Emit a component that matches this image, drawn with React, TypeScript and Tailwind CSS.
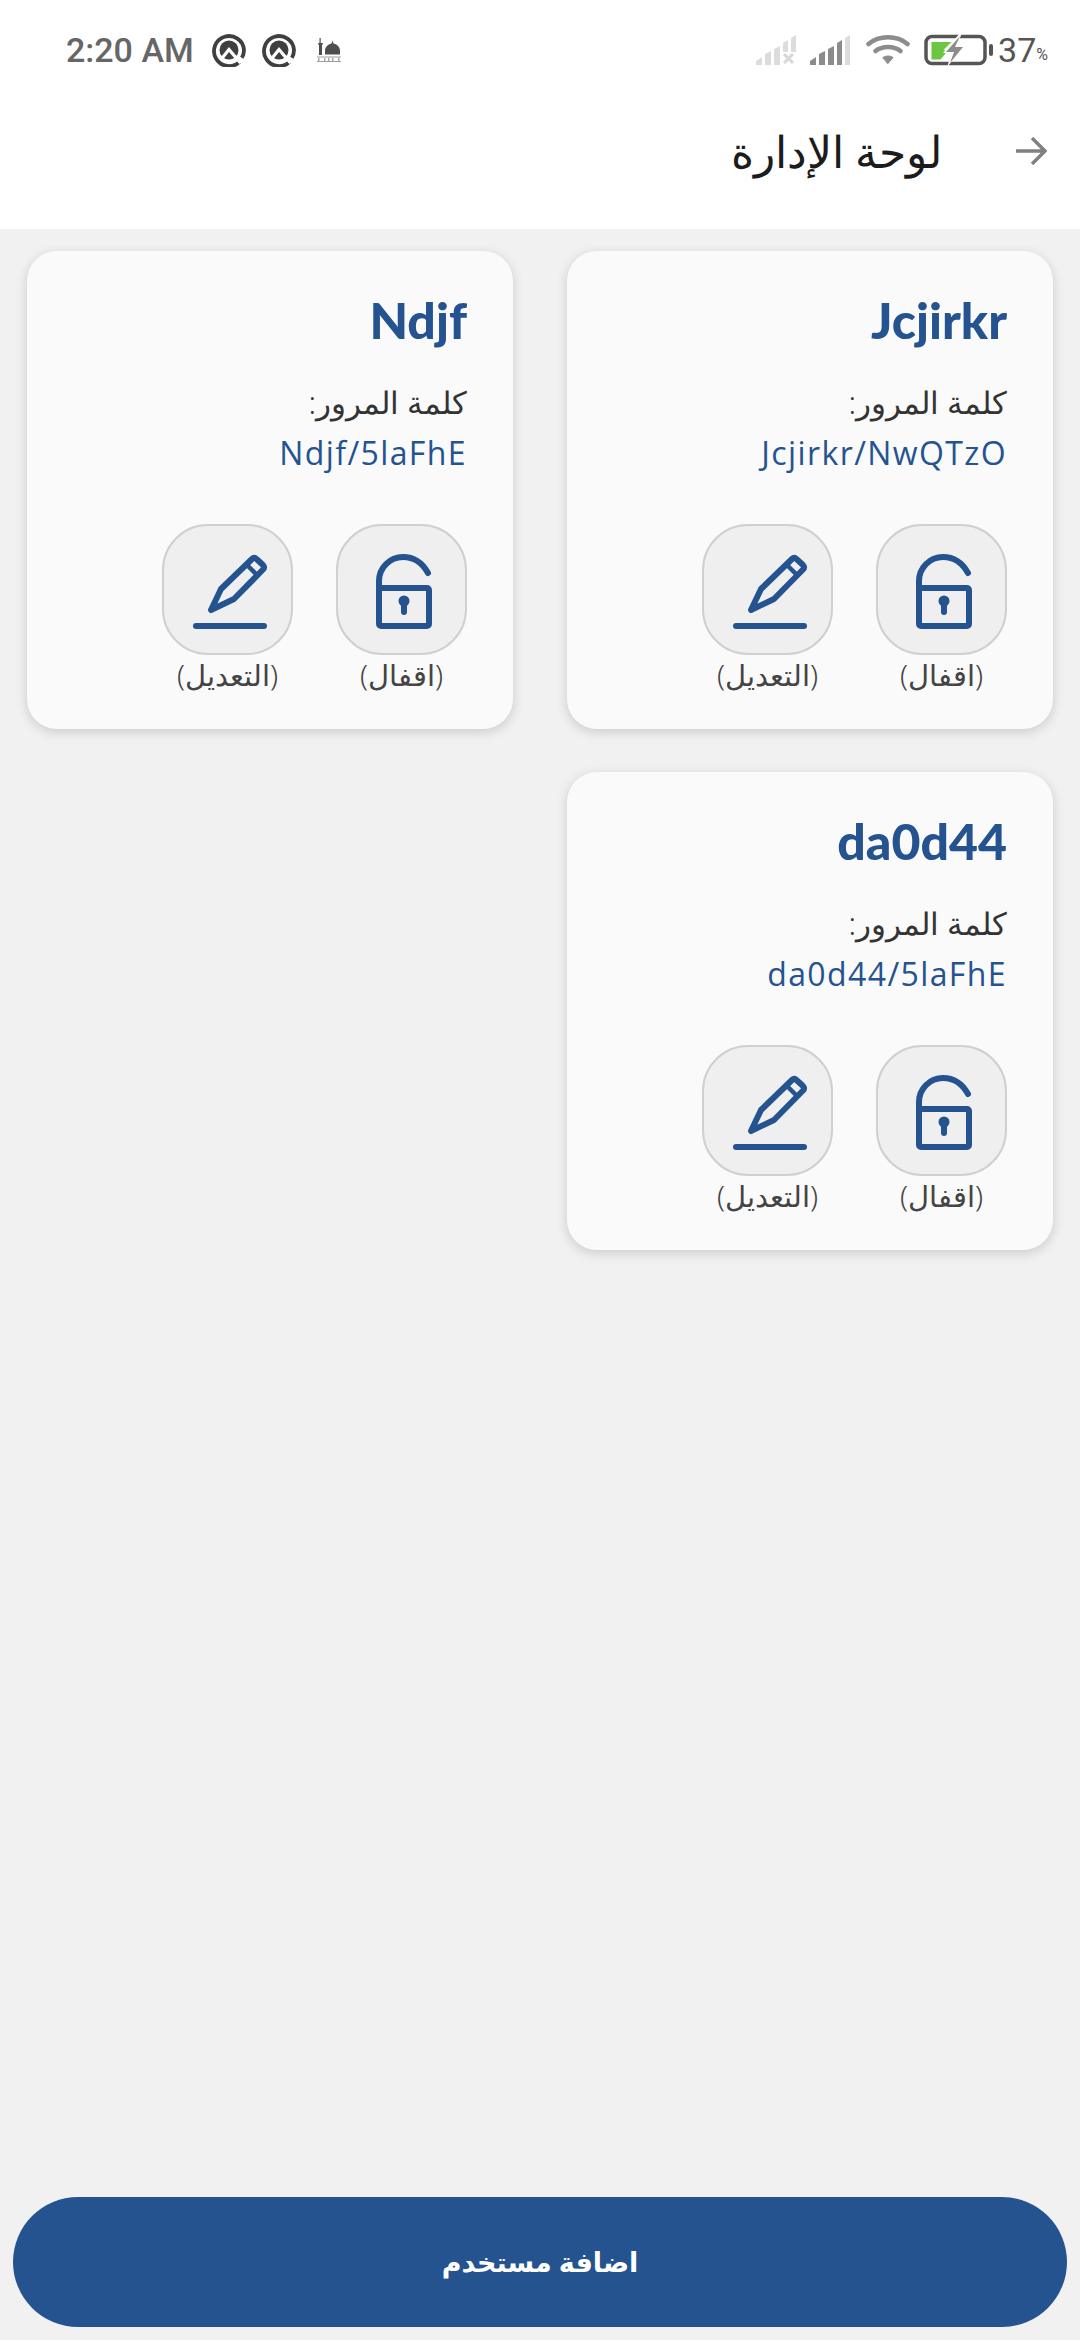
import React from "react";

const arabic = "font-['Noto_Sans','Open_Sans','DejaVu_Sans',sans-serif]";

function QIcon() {
  return (
    <svg width="34" height="34" viewBox="0 0 34 34" fill="none">
      <path d="M27.500 28.800A15 15 0 1 1 32 17c0 3-.8 5.500-2.200 7.800" stroke="#3f3f3f" strokeWidth="3.800" />
      <circle cx="17" cy="17" r="9.500" fill="#3f3f3f" />
      <path d="M9 26.500L17 16.500 28.500 30" stroke="#fff" strokeWidth="3.200" fill="none" />
    </svg>
  );
}

function Mosque() {
  return (
    <svg width="26" height="26" viewBox="0 0 26 26" fill="#4f4f4f">
      <rect x="3.500" y="1" width="1.200" height="5" />
      <path d="M2 6h5l-.7 2H6v10H3V8h-.3z" />
      <path d="M16.500 3.500l1 3c4 1 6.500 3.600 6.500 7.500v3.500H9V14C9 10.100 11.500 7.500 15.500 6.500z" />
      <rect x="1" y="19.500" width="24" height="1" opacity=".55" />
      <rect x="2" y="21" width="1.500" height="3" opacity=".5" />
      <rect x="8" y="21" width="1.500" height="3" opacity=".5" />
      <rect x="12" y="21" width="1.500" height="3" opacity=".5" />
      <rect x="16" y="21" width="1.500" height="3" opacity=".5" />
      <rect x="22" y="21" width="1.500" height="3" opacity=".5" />
      <rect x="1" y="24" width="24" height="1" opacity=".55" />
    </svg>
  );
}

function Signal({ faded }: { faded?: boolean }) {
  const c = faded ? "#dcdcdc" : "#8c8c8c";
  return (
    <svg width="40" height="30" viewBox="0 0 40 30">
      <path d="M0 30v-4l6-4v8z" fill={c} />
      <path d="M9 30V19l6-3v14z" fill={c} />
      <path d="M18 30V14l6-3v19z" fill={c} />
      <path d="M27 30V8l5-3v25z" fill={c} />
      <path d="M35 30V3l5-3v30z" fill="#dcdcdc" />
      {faded && (
        <>
          <rect x="26" y="17" width="14" height="13" fill="#fff" />
          <path d="M28 19l9 9M37 19l-9 9" stroke="#d8d8d8" strokeWidth="3" />
        </>
      )}
    </svg>
  );
}

function Wifi() {
  return (
    <svg width="44" height="32" viewBox="0 0 44 32" fill="none" stroke="#8c8c8c" strokeWidth="4.500" strokeLinecap="round">
      <path d="M2.500 10C13 1 31 1 41.500 10" />
      <path d="M9.500 17C16 11.500 28 11.500 34.500 17" />
      <path d="M17 23.500c3-2 7-2 10 0l-5 6z" fill="#8c8c8c" strokeWidth="1" strokeLinejoin="round" />
    </svg>
  );
}

function Battery() {
  return (
    <svg width="70" height="32" viewBox="0 0 70 32" fill="none">
      <rect x="2" y="2.500" width="59" height="27" rx="6" stroke="#555" strokeWidth="3.500" />
      <path d="M7.500 8h20l-8 8h5l-8 9.500h-9z" fill="#6cc644" />
      <path d="M36 -1L19 19h9l-5 14 19-22h-9l5-12z" fill="#fff" />
      <path d="M36 2L22 18h8l-4 11 13-16h-8l5-11z" fill="#8c8c8c" />
      <rect x="65" y="10" width="4" height="12" rx="2" fill="#555" />
    </svg>
  );
}

function StatusBar() {
  return (
    <div className="h-[100px] pl-[66px] pr-[32px] flex items-center justify-between">
      <div className="flex items-center">
        <span className="font-['Roboto',sans-serif] font-medium text-[34px] leading-none text-[#666666]">2:20 AM</span>
        <div className="ml-[18px] flex gap-[16px] items-center">
          <QIcon />
          <QIcon />
        </div>
        <div className="ml-[20px]">
          <Mosque />
        </div>
      </div>
      <div className="flex items-center">
        <Signal faded />
        <div className="ml-[14px]"><Signal /></div>
        <div className="ml-[16px]"><Wifi /></div>
        <div className="ml-[14px]"><Battery /></div>
        <span className="ml-[4px] font-['Roboto',sans-serif] text-[34px] leading-none text-[#555555]">37</span>
        <span className="font-['Roboto',sans-serif] text-[16px] leading-none text-[#555555] mt-[10px]">%</span>
      </div>
    </div>
  );
}

function Header() {
  return (
    <div dir="rtl" className="h-[129px] flex items-start pr-[33px] pt-[23px] bg-white">
      <svg width="32" height="28" viewBox="0 0 32 28" fill="none" stroke="#808080" strokeWidth="3.400" className="mt-[14px]">
        <path d="M1 14h29M17 1l13 13-13 13" />
      </svg>
      <span className={`mr-[73px] text-[44px] leading-[56px] font-light text-[#1c1c1c] ${arabic}`}>لوحة الإدارة</span>
    </div>
  );
}

function LockIcon() {
  return (
    <svg width="58" height="76" viewBox="0 0 58 76" fill="none" stroke="#245390" strokeWidth="6" strokeLinecap="round" strokeLinejoin="round" className="ml-[4px] mt-[3px]">
      <path d="M4 35V28A24 24 0 0 1 28 4C40 4 48 11 53 20" />
      <rect x="4" y="35" width="50" height="38" rx="2" />
      <circle cx="29" cy="48" r="2.500" fill="#245390" />
      <path d="M29 49v10" />
    </svg>
  );
}

function EditIcon() {
  return (
    <svg width="80" height="80" viewBox="0 0 80 80" fill="none" stroke="#245390" strokeWidth="6" strokeLinecap="round" strokeLinejoin="round" className="ml-[4px] mt-[4px]">
      <path d="M21 58l10-21L62 7c1.500-1.500 3-1.500 4.500 0l6.500 6c1.500 1.500 1.500 3 0 4.500L44 47z" />
      <path d="M57 13l10 10" strokeWidth="4.500" />
      <path d="M6 74h68" />
    </svg>
  );
}

function Action({ label, children }: { label: string; children: React.ReactNode }) {
  return (
    <div className="flex flex-col items-center w-[131px]">
      <div className="w-[131px] h-[131px] rounded-[46px] bg-[#efefef] border-2 border-[#d0d0d0] flex items-center justify-center">
        {children}
      </div>
      <span className={`mt-[1px] text-[29px] leading-[38px] font-light text-[#444444] whitespace-nowrap ${arabic}`}>{label}</span>
    </div>
  );
}

function UserCard({ name, password }: { name: string; password: string }) {
  return (
    <div dir="rtl" className="w-[486px] h-[478px] rounded-[30px] bg-[#fafafa] shadow-[0_3px_12px_rgba(0,0,0,0.16)] pt-[34px] pr-[46px]">
      <div dir="ltr" className="text-right text-[50px] leading-[70px] font-black text-[#245390] font-['Lato',sans-serif]">{name}</div>
      <div className={`mt-[25px] text-[31px] leading-[44px] font-light text-[#333333] ${arabic}`}>كلمة المرور:</div>
      <div dir="ltr" className="mt-[7px] text-right text-[32px] leading-[44px] tracking-[1.4px] text-[#245390] font-['Open_Sans',sans-serif]">{password}</div>
      <div className="mt-[49px] flex gap-[43px]">
        <Action label="(اقفال)"><LockIcon /></Action>
        <Action label="(التعديل)"><EditIcon /></Action>
      </div>
    </div>
  );
}

export default function App() {
  return (
    <div className="w-[1080px] h-[2340px] bg-[#f1f1f1] flex flex-col overflow-hidden">
      <div className="bg-white">
        <StatusBar />
        <Header />
      </div>
      <div dir="rtl" className="flex-1 pt-[22px] pr-[27px] pl-[27px]">
        <div className="flex flex-wrap gap-x-[54px] gap-y-[43px] content-start">
          <UserCard name="Jcjirkr" password="Jcjirkr/NwQTzO" />
          <UserCard name="Ndjf" password="Ndjf/5laFhE" />
          <UserCard name="da0d44" password="da0d44/5laFhE" />
        </div>
      </div>
      <div className="px-[13px] pb-[13px]">
        <button className={`w-full h-[130px] rounded-[65px] bg-[#245390] text-white text-[27px] font-bold ${arabic}`}>اضافة مستخدم</button>
      </div>
    </div>
  );
}
